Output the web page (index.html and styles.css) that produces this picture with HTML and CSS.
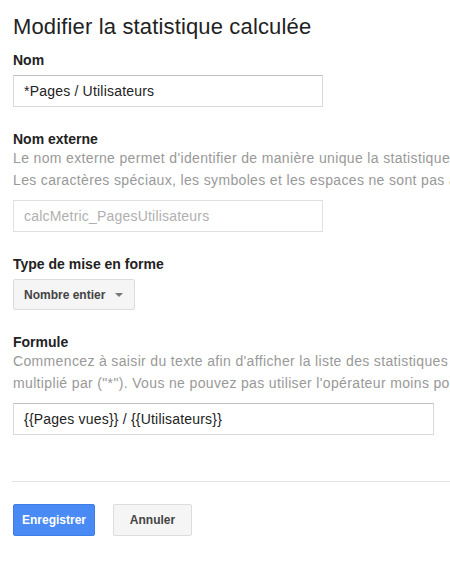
FILE: index.html
```html
<!DOCTYPE html>
<html lang="fr">
<head>
    <meta charset="UTF-8">
    <meta name="viewport" content="width=device-width, initial-scale=1.0">
    <title>Modifier la statistique calculée</title>
    <link rel="stylesheet" href="styles.css">
</head>
<body>
    <div class="page">
        <h1>Modifier la statistique calculée</h1>

        <div class="field first">
            <label class="field-label" for="nom">Nom</label>
            <input class="text-input" type="text" id="nom" value="*Pages / Utilisateurs">
        </div>

        <div class="field">
            <label class="field-label" for="externe">Nom externe</label>
            <div class="help">
                <div class="help-line">Le nom externe permet d'identifier de manière unique la statistique calculée.</div>
                <div class="help-line">Les caractères spéciaux, les symboles et les espaces ne sont pas autorisés.</div>
            </div>
            <input class="text-input" type="text" id="externe" placeholder="calcMetric_PagesUtilisateurs" disabled>
        </div>

        <div class="field">
            <label class="field-label">Type de mise en forme</label>
            <button class="dropdown" type="button">
                Nombre entier
                <span class="caret"></span>
            </button>
        </div>

        <div class="field">
            <label class="field-label" for="formule">Formule</label>
            <div class="help">
                <div class="help-line">Commencez à saisir du texte afin d'afficher la liste des statistiques</div>
                <div class="help-line">multiplié par ("*"). Vous ne pouvez pas utiliser l'opérateur moins pour le moment.</div>
            </div>
            <input class="text-input wide" type="text" id="formule" value="{{Pages vues}} / {{Utilisateurs}}">
        </div>

        <hr class="separator">

        <div class="actions">
            <button class="btn btn-primary" type="button">Enregistrer</button>
            <button class="btn" type="button">Annuler</button>
        </div>
    </div>
</body>
</html>
```

FILE: styles.css
```css
body {
    margin: 0;
    font-family: "Liberation Sans", Arial, sans-serif;
    color: #222;
    background: #fff;
    overflow: hidden;
}
.page {
    padding: 14px 0 0 13px;
}
h1 {
    margin: 0;
    font-size: 22px;
    font-weight: normal;
    line-height: 26px;
    letter-spacing: 0.15px;
    color: #222;
}
.field {
    margin-top: 24px;
}
.field.first {
    margin-top: 12px;
}
.field-label {
    display: block;
    font-size: 14px;
    font-weight: bold;
    line-height: 16px;
    color: #222;
    margin-bottom: 7px;
}
.help {
    margin-top: -7px;
    margin-bottom: 9px;
    font-size: 14px;
    line-height: 22px;
    letter-spacing: 0.35px;
    color: #999;
    overflow: hidden;
}
.help-line {
    white-space: nowrap;
}
.text-input {
    display: block;
    box-sizing: border-box;
    width: 310px;
    height: 32px;
    padding: 0 10px;
    border: 1px solid #d9d9d9;
    border-top-color: #c0c0c0;
    font-family: "Liberation Sans", Arial, sans-serif;
    font-size: 14px;
    letter-spacing: 0.2px;
    color: #222;
    background: #fff;
    outline: none;
}
.text-input::placeholder {
    color: #b0b0b0;
}
.text-input:disabled {
    background: #fff;
    border-color: #e0e0e0;
}
.text-input.wide {
    width: 421px;
}
.dropdown {
    display: flex;
    align-items: center;
    box-sizing: border-box;
    width: 122px;
    height: 31px;
    padding: 0 10px;
    border: 1px solid #dcdcdc;
    border-radius: 2px;
    background: #f5f5f5;
    font-family: "Liberation Sans", Arial, sans-serif;
    font-size: 12px;
    font-weight: bold;
    color: #444;
    cursor: pointer;
}
.caret {
    margin-left: auto;
    margin-right: 1px;
    border-left: 4px solid transparent;
    border-right: 4px solid transparent;
    border-top: 4px solid #777;
}
.separator {
    margin: 46px 0 0 -1px;
    border: none;
    border-top: 1px solid #e5e5e5;
}
.actions {
    display: flex;
    gap: 18px;
    margin-top: 22px;
}
.btn {
    box-sizing: border-box;
    width: 79px;
    height: 32px;
    border: 1px solid #dcdcdc;
    border-radius: 2px;
    background: #f5f5f5;
    font-family: "Liberation Sans", Arial, sans-serif;
    font-size: 12px;
    font-weight: bold;
    color: #444;
    cursor: pointer;
}
.btn-primary {
    width: 82px;
    background: #4a8af4;
    border-color: #3d7ee8;
    color: #fff;
}
```
